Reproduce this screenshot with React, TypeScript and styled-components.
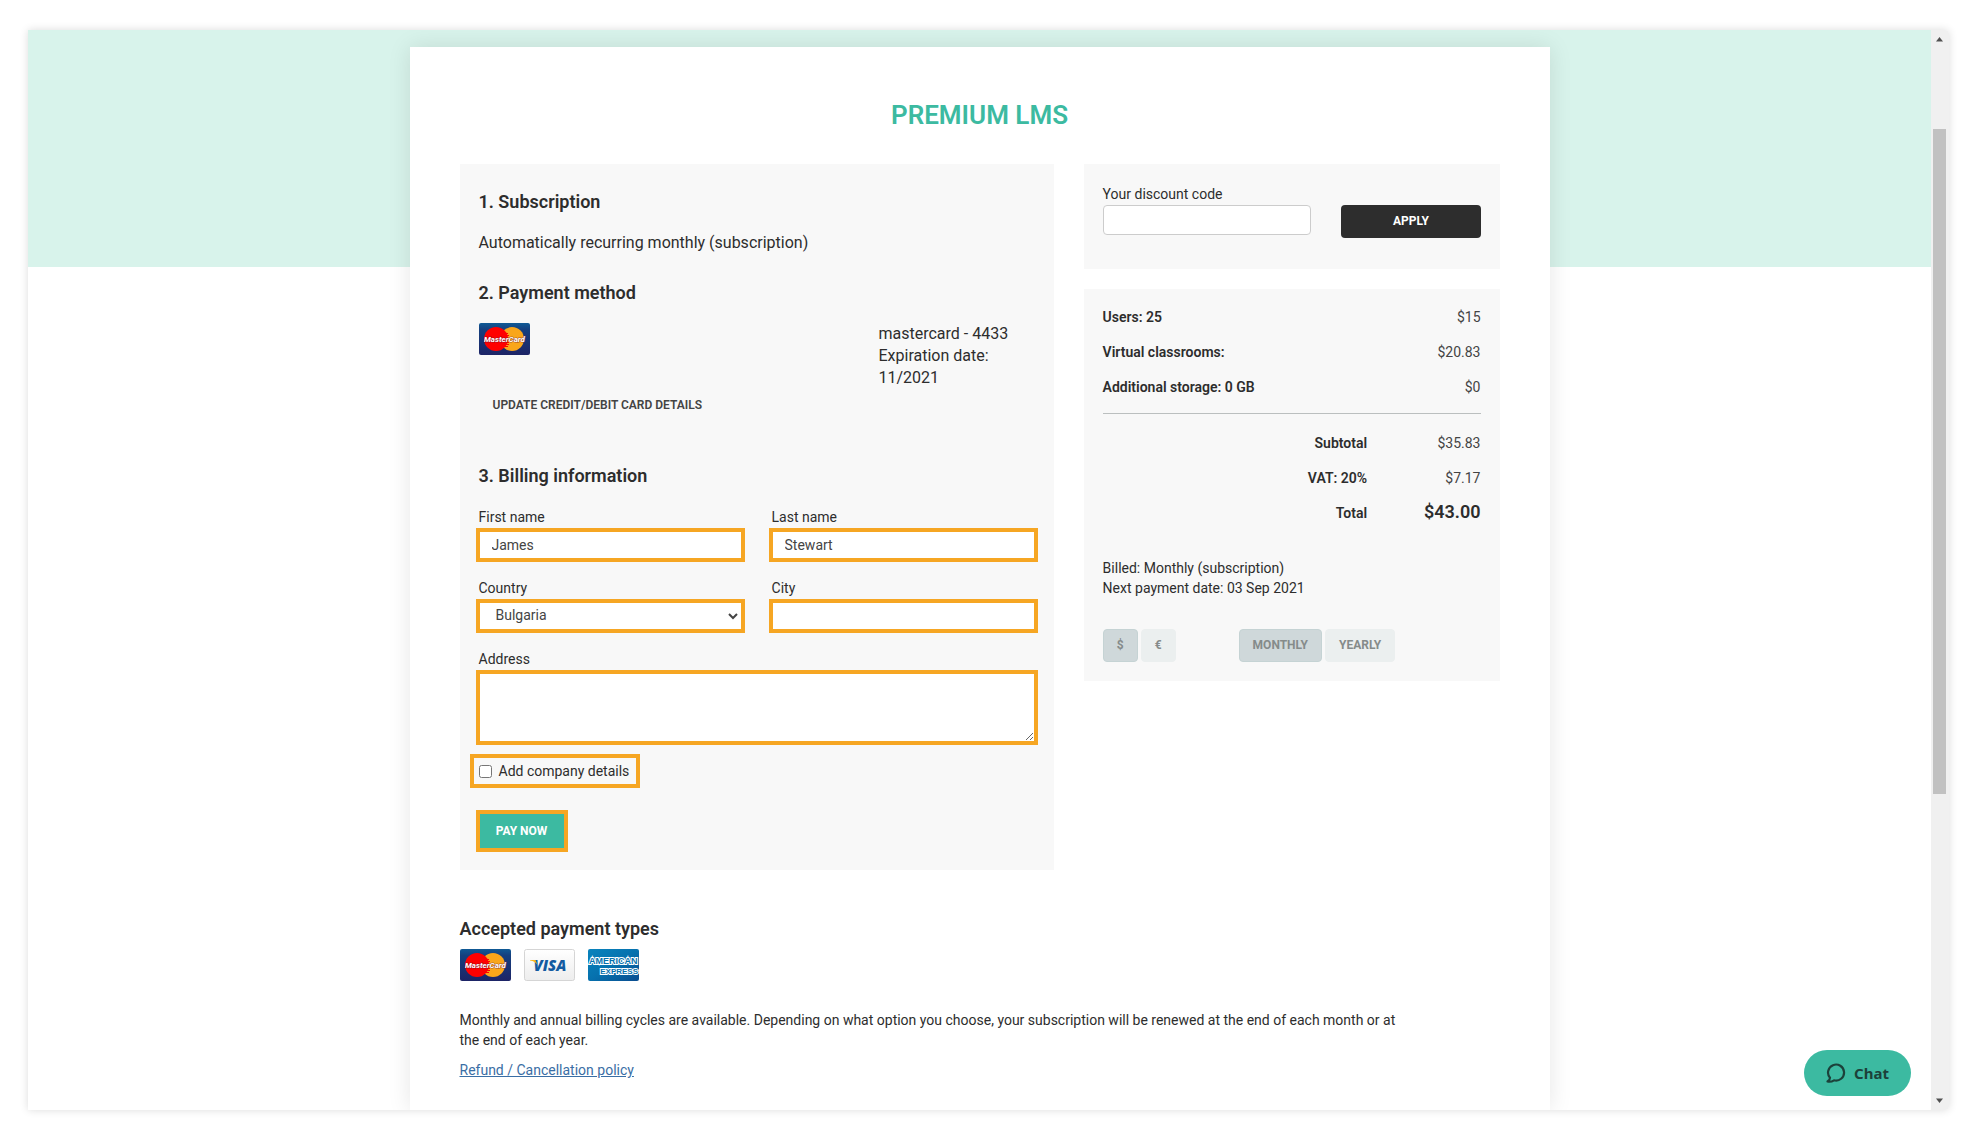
import React from "react";
import styled, { createGlobalStyle, css } from "styled-components";

const teal = "#3cbaa1";
const ink = "#2d2d2d";
const orange = "#f6a623";

const Global = createGlobalStyle`
  *, *::before, *::after { box-sizing: border-box; }
  body {
    margin: 0;
    background: #fff;
    color: ${ink};
    font: 400 14px/20px Roboto, "Liberation Sans", sans-serif;
  }
  button, input, select, textarea { font: inherit; color: inherit; }
  h1, h2, p { margin: 0; }
`;

const Page = styled.div`
  min-height: 100vh;
  padding: 30px 27px 30px 28px;
  display: flex;
`;

const Frame = styled.div`
  flex: 1;
  display: flex;
  overflow: hidden;
  border-radius: 0 4px 4px 0;
  box-shadow: 0 0 8px rgba(0, 0, 0, 0.14);
`;

const Viewport = styled.main`
  flex: 1;
  display: flex;
  justify-content: center;
  padding-top: 17px;
  background: linear-gradient(#d8f3eb, #d8f3eb) top / 100% 237px no-repeat #fff;
`;

const Card = styled.div`
  width: 100%;
  max-width: 1140px;
  padding: 50px 50px 28px;
  background: #fff;
  box-shadow: 0 0 22px rgba(0, 0, 0, 0.1);
`;

const Title = styled.h1`
  color: ${teal};
  text-align: center;
  font-size: 26px;
  line-height: 36px;
  font-weight: 600;
  margin-bottom: 31px;
`;

const Columns = styled.div`
  display: grid;
  grid-template-columns: minmax(0, 10fr) minmax(0, 7fr);
  gap: 30px;
  align-items: start;
`;

const SideColumn = styled.div`
  display: grid;
  gap: 20px;
`;

const Panel = styled.section<{ $pad: string }>`
  background: #f8f8f8;
  padding: ${(p) => p.$pad};
`;

const Block = styled.div<{ $gap: number }>`
  padding: 0 3px;
  margin-bottom: ${(p) => p.$gap}px;
`;

const Heading = styled.h2`
  font-size: 18px;
  line-height: 24px;
  font-weight: 600;
`;

const Lead = styled.p`
  font-size: 16px;
  line-height: 22px;
`;

const Plan = styled(Lead)`
  margin-top: 18px;
`;

const MethodRow = styled.div`
  display: grid;
  grid-template-columns: 400px minmax(0, 140px);
  margin-top: 18px;
`;

const PlainButton = styled.button`
  border: 0;
  background: none;
  padding: 6px 14px;
  font-size: 12px;
  font-weight: 600;
  color: #444;
  text-transform: uppercase;
`;

const Form = styled.form`
  display: grid;
  grid-template-columns: 1fr 1fr;
  gap: 17px 24px;
`;

const Field = styled.div<{ $wide?: boolean }>`
  display: flex;
  flex-direction: column;
  ${(p) => p.$wide && css`grid-column: 1 / -1;`}
`;

const Label = styled.label`
  display: block;
  line-height: 18px;
  padding-bottom: 2px;
`;

const FieldLabel = styled(Label)`
  padding-left: 3px;
`;

const outlined = css`
  border: 4px solid ${orange};
  border-radius: 0;
  outline: none;
`;

const TextInput = styled.input`
  ${outlined}
  height: 34px;
  padding: 0 12px;
  background: #fff;
  color: #444;
`;

const Select = styled.select`
  ${outlined}
  height: 34px;
  padding: 0 0 2px 12px;
  background: #fff;
  color: #444;
`;

const TextArea = styled.textarea`
  ${outlined}
  display: block;
  height: 75px;
  padding: 6px 12px;
  background: #fff;
  resize: vertical;
`;

const FormFoot = styled.div`
  display: flex;
  flex-direction: column;
  align-items: flex-start;
  gap: 22px;
  margin-top: 9px;
`;

const CheckLabel = styled.label`
  ${outlined}
  display: flex;
  align-items: center;
  gap: 7px;
  height: 34px;
  margin-left: -6px;
  padding: 0 7px 0 5px;
`;

const Checkbox = styled.input`
  width: 13px;
  height: 13px;
  margin: 0;
`;

const PayButton = styled.button`
  ${outlined}
  height: 42px;
  min-width: 92px;
  padding: 0 16px;
  background: ${teal};
  color: #fff;
  font-size: 12px;
  font-weight: 700;
`;

const CodeRow = styled.div`
  display: grid;
  grid-template-columns: 3fr 2fr;
  gap: 30px;
  align-items: start;
`;

const CodeInput = styled.input`
  width: 100%;
  min-width: 0;
  height: 30px;
  border: 1px solid #ccc;
  border-radius: 4px;
  padding: 0 10px;
  background: #fff;
`;

const ApplyButton = styled.button`
  height: 33px;
  border: 0;
  border-radius: 4px;
  padding: 0 12px 2px;
  background: ${ink};
  color: #fff;
  font-size: 12px;
  font-weight: 700;
`;

const Lines = styled.table<{ $totals?: boolean }>`
  width: 100%;
  border-collapse: collapse;
  th, td { height: 35px; padding: 0 0 2px; }
  th { font-weight: 600; text-align: ${(p) => (p.$totals ? "right" : "left")}; width: 70%; }
  td { text-align: right; color: #444; }
`;

const GrandTotal = styled.strong`
  font-size: 18px;
  font-weight: 600;
  color: ${ink};
`;

const Divider = styled.hr`
  border: 0;
  border-top: 1px solid #bbbfbf;
  margin: 8px 0 12px;
`;

const Billed = styled.p`
  margin: 27px 0 31px;
`;

const Toggles = styled.div`
  display: flex;
  gap: 63px;
`;

const Group = styled.div`
  display: flex;
  gap: 3px;
`;

const Toggle = styled.button<{ $on?: boolean }>`
  height: 33px;
  min-width: 35px;
  padding: 0 13px 2px;
  border: 1px solid ${(p) => (p.$on ? "#c5d3d4" : "#ebefef")};
  border-radius: 4px;
  background: ${(p) => (p.$on ? "#cfd8da" : "#ebefef")};
  color: #858b8a;
  font-size: 12px;
  font-weight: 700;
`;

const Accepted = styled.section`
  margin-top: 47px;
`;

const Logos = styled.div`
  display: flex;
  gap: 12px;
  margin: 8px 0 29px;
`;

const Logo = styled.svg`
  display: block;
  width: 52px;
  height: 32px;
`;

const Note = styled.p`
  max-width: 940px;
  margin-bottom: 10px;
`;

const PolicyLink = styled.a`
  color: #3a6ea5;
  text-decoration: underline;
`;

const Scrollbar = styled.div`
  width: 18px;
  background: #f0f0f0;
  display: flex;
  flex-direction: column;
  align-items: center;
  padding: 7px 3px 7px 2px;
`;

const Track = styled.div`
  flex: 1;
  width: 13px;
  display: grid;
  grid-template-rows: 87fr 665fr 304fr;
`;

const Thumb = styled.div`
  grid-row: 2;
  background: #c1c1c1;
`;

const Arrow = styled.svg`
  display: block;
  width: 7px;
  height: 5px;
`;

const ChatButton = styled.button`
  position: fixed;
  right: 65px;
  bottom: 44px;
  width: 107px;
  height: 46px;
  display: flex;
  align-items: center;
  justify-content: center;
  gap: 8px;
  border: 0;
  border-radius: 23px;
  background: ${teal};
  color: #1c413a;
  font: 700 15px/20px "Noto Sans", "Open Sans", sans-serif;
`;

const ChatIcon = styled.svg`
  width: 20px;
  height: 20px;
`;

function MasterCard() {
  return (
    <Logo viewBox="0 0 52 32" role="img" aria-label="MasterCard">
      <defs>
        <linearGradient id="mc" x1="0" y1="0" x2="0" y2="1">
          <stop offset="0" stopColor="#0f5a96" />
          <stop offset="0.2" stopColor="#15407f" />
          <stop offset="1" stopColor="#1d2466" />
        </linearGradient>
      </defs>
      <rect width="51" height="32" rx="2" fill="url(#mc)" />
      <circle cx="33" cy="16" r="12" fill="#f9a61a" />
      <circle cx="17" cy="16" r="12" fill="#f00" />
      <path d="M22 10.500h7M21 12.500h9M21 19.500h9M22 21.500h8M23 23.500h6" stroke="#f00" />
      <text x="25.500" y="19" textAnchor="middle" fontFamily="Roboto, sans-serif" fontSize="8" fontWeight="700" fontStyle="italic" fill="#fff" stroke="#6b1530" strokeOpacity="0.6" strokeWidth="1" paintOrder="stroke">MasterCard</text>
    </Logo>
  );
}

function Visa() {
  return (
    <Logo viewBox="0 0 52 32" role="img" aria-label="Visa">
      <defs>
        <linearGradient id="vs" x1="0" y1="0" x2="0" y2="1">
          <stop offset="0" stopColor="#fff" />
          <stop offset="1" stopColor="#ededed" />
        </linearGradient>
      </defs>
      <rect x="0.500" y="0.500" width="50" height="31" rx="2" fill="url(#vs)" stroke="#d5d5d5" />
      <text x="26" y="22" textAnchor="middle" fontFamily="Open Sans, sans-serif" fontSize="15" fontWeight="800" fontStyle="italic" fill="#135ba1">VISA</text>
      <path d="M6 11h5.500l2 5c-1.500-2.500-4-4-7.500-4.500z" fill="#f9b51c" />
    </Logo>
  );
}

function Amex() {
  return (
    <Logo viewBox="0 0 52 32" role="img" aria-label="American Express">
      <defs>
        <linearGradient id="ax" x1="0" y1="0" x2="1" y2="1">
          <stop offset="0" stopColor="#0a84bd" />
          <stop offset="0.500" stopColor="#0671ae" />
          <stop offset="1" stopColor="#0a4c8f" />
        </linearGradient>
      </defs>
      <rect width="51" height="32" rx="2" fill="url(#ax)" />
      <g fontFamily="Liberation Sans, sans-serif" fontWeight="700" fill="#0671ae" stroke="#fff" strokeWidth="2" paintOrder="stroke">
        <text x="1" y="15" fontSize="9">AMERICAN</text>
        <text x="50" y="25" fontSize="8" textAnchor="end">EXPRESS</text>
      </g>
    </Logo>
  );
}

const items = [
  ["Users: 25", "$15"],
  ["Virtual classrooms:", "$20.83"],
  ["Additional storage: 0 GB", "$0"],
];

export default function App() {
  return (
    <Page>
      <Global />
      <Frame>
        <Viewport>
          <Card>
            <Title>PREMIUM LMS</Title>
            <Columns>
              <Panel $pad="26px 16px 18px">
                <Block $gap={27}>
                  <Heading>1. Subscription</Heading>
                  <Plan>Automatically recurring monthly (subscription)</Plan>
                </Block>
                <Block $gap={43}>
                  <Heading>2. Payment method</Heading>
                  <MethodRow>
                    <MasterCard />
                    <Lead>mastercard - 4433<br />Expiration date: 11/2021</Lead>
                  </MethodRow>
                  <PlainButton type="button">Update credit/debit card details</PlainButton>
                </Block>
                <Block $gap={20}>
                  <Heading>3. Billing information</Heading>
                </Block>
                <Form onSubmit={(e) => e.preventDefault()} id="billing">
                  <Field>
                    <FieldLabel htmlFor="first">First name</FieldLabel>
                    <TextInput id="first" defaultValue="James" />
                  </Field>
                  <Field>
                    <FieldLabel htmlFor="last">Last name</FieldLabel>
                    <TextInput id="last" defaultValue="Stewart" />
                  </Field>
                  <Field>
                    <FieldLabel htmlFor="country">Country</FieldLabel>
                    <Select id="country" defaultValue="Bulgaria"><option>Bulgaria</option></Select>
                  </Field>
                  <Field>
                    <FieldLabel htmlFor="city">City</FieldLabel>
                    <TextInput id="city" />
                  </Field>
                  <Field $wide>
                    <FieldLabel htmlFor="address">Address</FieldLabel>
                    <TextArea id="address" />
                  </Field>
                </Form>
                <FormFoot>
                  <CheckLabel><Checkbox type="checkbox" form="billing" />Add company details</CheckLabel>
                  <PayButton type="submit" form="billing">PAY NOW</PayButton>
                </FormFoot>
              </Panel>
              <SideColumn>
                <Panel $pad="21px 19px 31px">
                  <Label htmlFor="code">Your discount code</Label>
                  <CodeRow>
                    <CodeInput id="code" />
                    <ApplyButton type="button">APPLY</ApplyButton>
                  </CodeRow>
                </Panel>
                <Panel $pad="11px 19px 19px">
                  <Lines>
                    <tbody>
                      {items.map(([name, price]) => (
                        <tr key={name}><th scope="row">{name}</th><td>{price}</td></tr>
                      ))}
                    </tbody>
                  </Lines>
                  <Divider />
                  <Lines $totals>
                    <tbody>
                      <tr><th scope="row">Subtotal</th><td>$35.83</td></tr>
                      <tr><th scope="row">VAT: 20%</th><td>$7.17</td></tr>
                      <tr><th scope="row">Total</th><td><GrandTotal>$43.00</GrandTotal></td></tr>
                    </tbody>
                  </Lines>
                  <Billed>Billed: Monthly (subscription)<br />Next payment date: 03 Sep 2021</Billed>
                  <Toggles>
                    <Group>
                      <Toggle type="button" $on>$</Toggle>
                      <Toggle type="button">€</Toggle>
                    </Group>
                    <Group>
                      <Toggle type="button" $on>MONTHLY</Toggle>
                      <Toggle type="button">YEARLY</Toggle>
                    </Group>
                  </Toggles>
                </Panel>
              </SideColumn>
            </Columns>
            <Accepted>
              <Heading>Accepted payment types</Heading>
              <Logos><MasterCard /><Visa /><Amex /></Logos>
              <Note>
                Monthly and annual billing cycles are available. Depending on what option you choose, your
                subscription will be renewed at the end of each month or at the end of each year.
              </Note>
              <PolicyLink href="#policy">Refund / Cancellation policy</PolicyLink>
            </Accepted>
          </Card>
        </Viewport>
        <Scrollbar aria-hidden="true">
          <Arrow viewBox="0 0 7 5"><path d="M3.500 0L7 4.500H0z" fill="#505050" /></Arrow>
          <Track><Thumb /></Track>
          <Arrow viewBox="0 0 7 5"><path d="M3.500 5L0 .5H7z" fill="#505050" /></Arrow>
        </Scrollbar>
      </Frame>
      <ChatButton type="button">
        <ChatIcon viewBox="0 0 20 20" fill="none" stroke="currentColor" strokeWidth="2.2" strokeLinejoin="round">
          <path d="M4 14.800A8 8 0 1 1 8 17.300C6 18.600 3.500 18.900 1.500 18.500C3 17.500 4 16.300 4 14.800Z" />
        </ChatIcon>
        Chat
      </ChatButton>
    </Page>
  );
}
